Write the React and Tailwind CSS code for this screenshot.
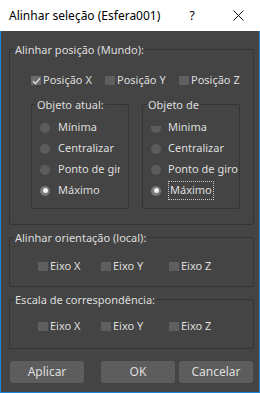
import React from "react";

function Check({ checked, label, w }) {
  return (
    <div className={`flex items-center h-[13px] ${w}`}>
      <span className={`w-[10px] h-[9px] flex items-center justify-center ${checked ? "bg-[#6a6a6a]" : "bg-[#5f5f5f]"}`}>
        {checked && (
          <svg width="9" height="8" viewBox="0 0 9 8">
            <path d="M1 4.2 L3.4 6.5 L8 1.3" fill="none" stroke="#d2d2d2" strokeWidth="1.6" />
          </svg>
        )}
      </span>
      <span className="ml-[2px] whitespace-nowrap">{label}</span>
    </div>
  );
}

function Radio({ sel, label, focus, half, gap, clip }) {
  return (
    <div className="flex items-center h-[21px]">
      {half ? (
        <span className="w-[10px] h-[10px] flex items-end">
          <span className="w-[10px] h-[7px] rounded-b-[5px] bg-[#5c5c5c]" />
        </span>
      ) : sel ? (
        <span className="w-[10px] h-[10px] rounded-full bg-[#7a7a7a] flex items-center justify-center">
          <span className="w-[5px] h-[5px] rounded-full bg-[#f2f2f2]" />
        </span>
      ) : (
        <span className="w-[10px] h-[10px] rounded-full bg-[#5c5c5c]" />
      )}
      <span
        className={`${gap} whitespace-nowrap ${clip ? "w-[62px] overflow-hidden" : ""} ${
          focus ? "border border-dotted border-[#c8c8c8] px-[1px] -ml-[1px]" : ""
        }`}
      >
        {label}
      </span>
    </div>
  );
}

function Box({ title, children, className }) {
  return (
    <fieldset className={`border border-[#343434] rounded-[2px] m-0 p-0 min-w-0 ${className}`}>
      <legend className="ml-[4px] px-[1px] h-[13px] leading-[13px]">{title}</legend>
      {children}
    </fieldset>
  );
}

export default function App() {
  return (
    <div className="w-[260px] h-[393px] flex flex-col font-['Noto_Sans',sans-serif] text-[11px] text-[#dedede]">
      <div className="h-[31px] bg-white flex items-center text-[12px] text-black">
        <span className="ml-[9px] flex-1">Alinhar seleção (Esfera001)</span>
        <span className="w-[10px] text-center mr-[36px]">?</span>
        <svg width="11" height="11" viewBox="0 0 11 11" className="mr-[16px]">
          <path d="M0.5 0.5 L10.5 10.5 M10.5 0.5 L0.5 10.5" stroke="#111" strokeWidth="1" />
        </svg>
      </div>
      <div className="flex-1 bg-[#444444] border-l border-r border-b border-[#1a84d8] pl-[8px] pr-[5px] flex flex-col">
        <Box title="Alinhar posição (Mundo):" className="mt-[12px] pb-[15px]">
          <div className="flex pl-[21px] mt-[18px]">
            <Check checked label="Posição X" w="w-[75px]" />
            <Check label="Posição Y" w="w-[75px]" />
            <Check label="Posição Z" w="w-[75px]" />
          </div>
          <div className="flex pl-[21px] mt-[11px] gap-[13px]">
            <Box title="Objeto atual:" className="w-[98px] pb-[7px]">
              <div className="pl-[8px] pt-[6px]">
                <Radio label="Mínima" gap="ml-[8px]" clip />
                <Radio label="Centralizar" gap="ml-[8px]" clip />
                <Radio label="Ponto de giro" gap="ml-[8px]" clip />
                <Radio sel label="Máximo" gap="ml-[8px]" clip />
              </div>
            </Box>
            <Box title="Objeto de" className="w-[98px] pb-[7px]">
              <div className="pl-[8px] pt-[6px]">
                <Radio half label="Minima" gap="ml-[7px]" />
                <Radio label="Centralizar" gap="ml-[7px]" />
                <Radio label="Ponto de giro" gap="ml-[7px]" />
                <Radio sel focus label="Máximo" gap="ml-[7px]" />
              </div>
            </Box>
          </div>
        </Box>
        <Box title="Alinhar orientação (local):" className="mt-[6px] pb-[13px]">
          <div className="flex pl-[28px] mt-[16px]">
            <Check label="Eixo X" w="w-[63px]" />
            <Check label="Eixo Y" w="w-[68px]" />
            <Check label="Eixo Z" w="w-[63px]" />
          </div>
        </Box>
        <Box title="Escala de correspondência:" className="mt-[6px] pb-[15px]">
          <div className="flex pl-[28px] mt-[14px]">
            <Check label="Eixo X" w="w-[63px]" />
            <Check label="Eixo Y" w="w-[68px]" />
            <Check label="Eixo Z" w="w-[63px]" />
          </div>
        </Box>
        <div className="flex mt-[12px] ml-[1px] text-[12px]">
          <button className="w-[74px] h-[22px] rounded-[3px] bg-[#5d5d5d] text-[#dedede]">Aplicar</button>
          <button className="w-[74px] h-[22px] rounded-[3px] bg-[#5d5d5d] text-[#dedede] ml-[17px]">OK</button>
          <button className="w-[74px] h-[22px] rounded-[3px] bg-[#5d5d5d] text-[#dedede] ml-[4px]">Cancelar</button>
        </div>
      </div>
    </div>
  );
}
